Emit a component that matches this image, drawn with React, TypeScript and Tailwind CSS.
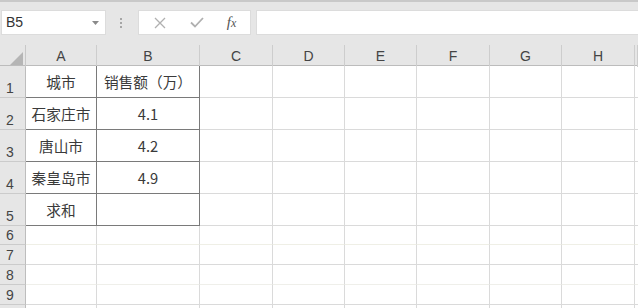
import React from 'react';

const cols = ['A', 'B', 'C', 'D', 'E', 'F', 'G', 'H', ''];

const data: Record<number, [string, string]> = {
    1: ['城市', '销售额（万）'],
    2: ['石家庄市', '4.1'],
    3: ['唐山市', '4.2'],
    4: ['秦皇岛市', '4.9'],
    5: ['求和', ''],
};

// row number, height class, bottom line colour (the faint lines are how the shot looks)
const rows = [
    { n: 1, h: 'h-[32px]', line: 'border-b-[#dadada]' },
    { n: 2, h: 'h-[32px]', line: 'border-b-[#dadada]' },
    { n: 3, h: 'h-[32px]', line: 'border-b-[#dadada]' },
    { n: 4, h: 'h-[32px]', line: 'border-b-[#dadada]' },
    { n: 5, h: 'h-[32px]', line: 'border-b-[#dadada]' },
    { n: 6, h: 'h-[19px]', line: 'border-b-[#efefe6]' },
    { n: 7, h: 'h-[20px]', line: 'border-b-[#dadada]' },
    { n: 8, h: 'h-[20px]', line: 'border-b-[#efefea]' },
    { n: 9, h: 'h-[20px]', line: 'border-b-[#dadada]' },
    { n: 10, h: 'h-[20px]', line: 'border-b-[#dadada]' },
];

const gridCols = 'grid grid-cols-[26px_71px_103px_73px_72px_72px_73px_72px_73px_1fr]';
const cellFont = { fontFamily: '"Noto Sans CJK SC", "Liberation Sans", sans-serif' };
const headFont = { fontFamily: '"Liberation Sans", "Noto Sans CJK SC", sans-serif' };

const Toolbar: React.FC = () => (
    <div className="h-[45px] bg-[#e6e6e6] border-t-2 border-[#c9c9c9] flex items-start pt-[8px]">
        {/* Name box */}
        <div className="ml-[1px] w-[105px] h-[25px] bg-white border border-[#dcdcdc] flex items-center justify-between pl-[4px] pr-[6px]">
            <span className="text-[14px] text-[#333]" style={headFont}>B5</span>
            <svg width="7" height="4" viewBox="0 0 7 4">
                <path d="M0 0 L7 0 L3.5 4 Z" fill="#8a8a8a" />
            </svg>
        </div>
        {/* grip dots */}
        <div className="w-[32px] h-[25px] flex flex-col items-center justify-center gap-[2px] pr-[2px]">
            <span className="w-[2px] h-[2px] bg-[#a6a6a6]" />
            <span className="w-[2px] h-[2px] bg-[#a6a6a6]" />
            <span className="w-[2px] h-[2px] bg-[#a6a6a6]" />
        </div>
        {/* cancel / enter / fx */}
        <div className="w-[113px] h-[25px] bg-white border border-[#dcdcdc] flex items-center">
            <div className="w-[38px] flex justify-center pl-[4px]">
                <svg width="12" height="12" viewBox="0 0 12 12">
                    <path d="M1 1 L11 11 M11 1 L1 11" stroke="#b0b0b0" strokeWidth="1.3" />
                </svg>
            </div>
            <div className="w-[38px] flex justify-center pl-[2px]">
                <svg width="14" height="11" viewBox="0 0 14 11">
                    <path d="M1 5.5 L5 9.5 L13 1" stroke="#b0b0b0" strokeWidth="1.8" fill="none" />
                </svg>
            </div>
            <div className="flex-1 flex justify-center pr-[2px]">
                <span className="text-[15px] italic text-[#555] leading-none" style={{ fontFamily: '"Liberation Serif", serif' }}>
                    f<span className="text-[12px]">x</span>
                </span>
            </div>
        </div>
        {/* formula input */}
        <div className="ml-[5px] flex-1 h-[25px] bg-white border border-r-0 border-[#dcdcdc]" />
    </div>
);

export default function App() {
    return (
        <div className="w-[638px] h-[308px] overflow-hidden bg-white">
            <Toolbar />

            {/* column headers */}
            <div className={`${gridCols} h-[21px] bg-[#e6e6e6] border-b border-[#bcbcbc]`}>
                <div className="relative border-r border-[#c8c8c8]">
                    <svg className="absolute right-[2px] bottom-[2px]" width="13" height="13" viewBox="0 0 13 13">
                        <path d="M13 0 L13 13 L0 13 Z" fill="#b5b5b5" />
                    </svg>
                </div>
                {cols.map((c, i) => (
                    <div
                        key={i}
                        className="border-r border-[#cdcdcd] flex items-center justify-center text-[14px] text-[#444] pt-[1px]"
                        style={headFont}
                    >
                        {c}
                    </div>
                ))}
            </div>

            {/* body rows */}
            {rows.map((r) => {
                const d = data[r.n];
                return (
                    <div key={r.n} className={`${gridCols} ${r.h}`}>
                        <div
                            className="bg-[#e6e6e6] border-r border-b border-r-[#bdbdbd] border-b-[#cbcbcb] flex items-end justify-center pr-[5px] pb-[2px] text-[14px] leading-none text-[#444]"
                            style={headFont}
                        >
                            {r.n < 10 ? r.n : ''}
                        </div>
                        {cols.map((_, ci) => {
                            const inTable = d && ci < 2;
                            const border = inTable
                                ? 'border-r border-b border-[#7a7a7a]'
                                : `border-b ${r.line} ${ci === 8 ? '' : 'border-r border-r-[#dadada]'}`;
                            return (
                                <div
                                    key={ci}
                                    className={`${border} flex items-center justify-center pt-[2px] text-[14.7px] text-[#3a3a3a] whitespace-nowrap`}
                                    style={cellFont}
                                >
                                    {inTable ? d[ci] : ''}
                                </div>
                            );
                        })}
                    </div>
                );
            })}
        </div>
    );
}
